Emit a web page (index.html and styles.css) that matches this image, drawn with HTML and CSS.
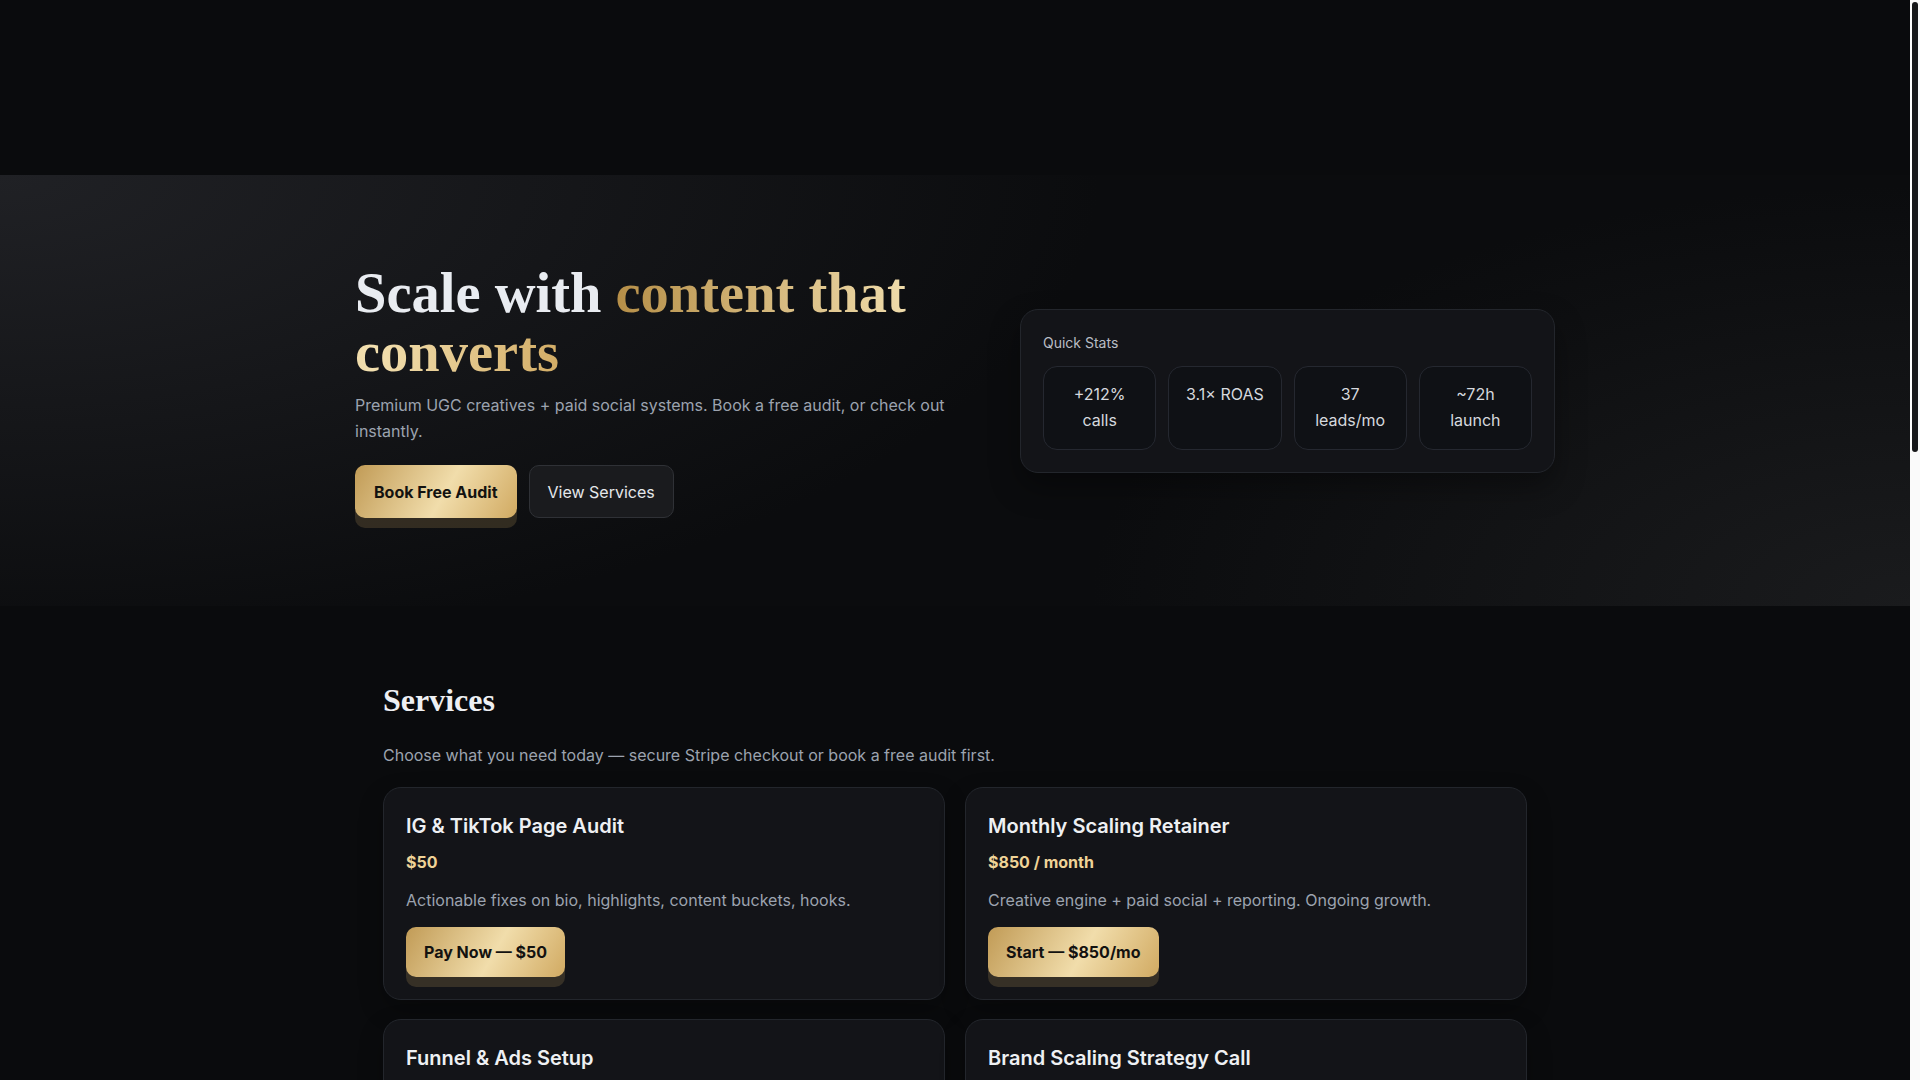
FILE: index.html
```html
<!DOCTYPE html>
<html lang="en">
<head>
<meta charset="utf-8">
<title>Scale with content that converts</title>
<link rel="stylesheet" href="styles.css">
</head>
<body>
<header class="topbar"></header>

<section class="hero">
  <div class="hero-inner">
    <div class="hero-copy">
      <h1>Scale with <span class="gold-text">content that converts</span></h1>
      <p class="lead">Premium UGC creatives + paid social systems. Book a free audit, or check out instantly.</p>
      <div class="actions">
        <a class="btn btn-gold btn-lg" href="#audit">Book Free Audit</a>
        <a class="btn btn-ghost btn-lg" href="#services">View Services</a>
      </div>
    </div>
    <aside class="stats">
      <div class="stats-label">Quick Stats</div>
      <div class="stat-grid">
        <div class="stat">+212%<br>calls</div>
        <div class="stat">3.1× ROAS</div>
        <div class="stat">37<br>leads/mo</div>
        <div class="stat">~72h<br>launch</div>
      </div>
    </aside>
  </div>
</section>

<section class="section services" id="services">
  <div class="container">
    <h2>Services</h2>
    <p class="sub">Choose what you need today — secure Stripe checkout or book a free audit first.</p>
    <div class="card-grid">
      <article class="card">
        <h3>IG &amp; TikTok Page Audit</h3>
        <div class="price">$50</div>
        <p class="desc">Actionable fixes on bio, highlights, content buckets, hooks.</p>
        <a class="btn btn-gold" href="#pay-audit">Pay Now — $50</a>
      </article>
      <article class="card">
        <h3>Monthly Scaling Retainer</h3>
        <div class="price">$850 / month</div>
        <p class="desc">Creative engine + paid social + reporting. Ongoing growth.</p>
        <a class="btn btn-gold" href="#pay-retainer">Start — $850/mo</a>
      </article>
      <article class="card">
        <h3>Funnel &amp; Ads Setup</h3>
        <div class="price">$497</div>
        <p class="desc">Landing page, pixel + CAPI, campaign structure and creative testing.</p>
        <a class="btn btn-gold" href="#pay-funnel">Pay Now — $497</a>
      </article>
      <article class="card">
        <h3>Brand Scaling Strategy Call</h3>
        <div class="price">$150</div>
        <p class="desc">60-minute deep dive with a custom 90-day growth roadmap.</p>
        <a class="btn btn-gold" href="#pay-call">Book — $150</a>
      </article>
    </div>
  </div>
</section>

<section class="section">
  <div class="container">
    <h2>How it works</h2>
    <p class="sub">A simple, proven process from audit to scale.</p>
    <div class="step-grid">
      <article class="card">
        <h3>1. Audit</h3>
        <p class="desc">We review your pages, ads and funnel to find the fastest wins.</p>
      </article>
      <article class="card">
        <h3>2. Create</h3>
        <p class="desc">UGC creatives and hooks built for scroll-stopping performance.</p>
      </article>
      <article class="card">
        <h3>3. Scale</h3>
        <p class="desc">Paid social systems, testing and reporting that compound growth.</p>
      </article>
    </div>
  </div>
</section>

<section class="section">
  <div class="container">
    <h2>Results</h2>
    <p class="sub">What clients see after working with us.</p>
    <div class="step-grid">
      <article class="card">
        <h3>+212% calls</h3>
        <p class="desc">Local service brand, 60 days of UGC + paid social.</p>
      </article>
      <article class="card">
        <h3>3.1× ROAS</h3>
        <p class="desc">E-commerce store, new creative engine and testing plan.</p>
      </article>
      <article class="card">
        <h3>37 leads/mo</h3>
        <p class="desc">Coaching business, funnel rebuild and lead campaigns.</p>
      </article>
    </div>
  </div>
</section>

<section class="section" id="audit">
  <div class="container">
    <div class="card cta">
      <h2>Book a free audit</h2>
      <p class="sub">Get a short video breakdown of your page and ads within 72 hours.</p>
      <a class="btn btn-gold" href="#book">Book Free Audit</a>
    </div>
  </div>
</section>

<footer class="footer">
  <div class="container">© 2025 All rights reserved.</div>
</footer>

<div class="fake-scrollbar" aria-hidden="true"><div class="fake-thumb"></div></div>
</body>
</html>
```

FILE: styles.css
```css
html {
  background: #0a0b0d;
}

body {
  margin: 0 10px 0 0;
  background: #0a0b0d;
  color: #e9ecf1;
  font-family: Inter, "Noto Sans", "Liberation Sans", sans-serif;
  font-size: 16px;
}

a {
  text-decoration: none;
}

.fake-scrollbar {
  position: fixed;
  top: 0;
  right: 0;
  width: 10px;
  height: 100vh;
  background: #fafafa;
}

.fake-thumb {
  margin: 2px 0 0 2px;
  width: 6px;
  height: 450px;
  border-radius: 3px;
  background: #161719;
}

.topbar {
  height: 175px;
  background: #0a0b0d;
}

.hero {
  padding: 89px 0 88px;
  background:
    radial-gradient(1100px 480px at 0% 0%, #202125 0%, rgba(11, 12, 14, 0) 100%),
    radial-gradient(820px 420px at 100% 100%, #1a1b1d 0%, rgba(11, 12, 14, 0) 100%),
    #0b0c0e;
}

.hero-inner {
  max-width: 1200px;
  margin: 0 auto;
  display: grid;
  grid-template-columns: 600px 535px;
  justify-content: space-between;
  align-items: center;
}

h1 {
  margin: 0 0 10px;
  font-family: "Liberation Serif", "Times New Roman", serif;
  font-weight: 700;
  font-size: 56.5px;
  line-height: 59px;
  color: #e9ecf1;
}

.gold-text {
  background: linear-gradient(90deg, #b68f48 0%, #f3e0b0 62%, #d3ad66 100%);
  -webkit-background-clip: text;
  background-clip: text;
  color: transparent;
}

.lead {
  margin: 0 0 21px;
  font-size: 16px;
  line-height: 26px;
  color: #9ca3af;
}

.actions {
  display: flex;
  gap: 12px;
}

.btn {
  display: inline-flex;
  align-items: center;
  box-sizing: border-box;
  height: 50px;
  padding: 0 18px;
  border-radius: 10px;
  font-size: 16px;
  line-height: 22px;
}

.btn-lg {
  height: 53px;
  padding: 0 19px;
}

.btn-gold {
  background: linear-gradient(120deg, #c19b56 0%, #f1ddab 55%, #d1aa62 100%);
  color: #131210;
  font-weight: 700;
  box-shadow: 0 10px 0 rgba(196, 160, 96, 0.2);
}

.btn-ghost {
  background: #1a1b1e;
  border: 1px solid #2f3136;
  color: #e5e7eb;
  font-weight: 400;
  padding: 0 18px;
}

.stats {
  background: #131418;
  border: 1px solid #23262c;
  border-radius: 18px;
  padding: 22px;
  box-shadow: 0 14px 30px rgba(0, 0, 0, 0.35);
}

.stats-label {
  margin: 0 0 12px;
  font-size: 14px;
  line-height: 22px;
  color: #b9bdc5;
}

.stat-grid {
  display: grid;
  grid-template-columns: repeat(4, 1fr);
  gap: 12px;
}

.stat {
  background: #0f1115;
  border: 1px solid #252830;
  border-radius: 14px;
  padding: 14px 6px 16px;
  text-align: center;
  font-size: 16px;
  line-height: 26px;
  color: #d6d9de;
}

.section {
  padding: 75px 0 60px;
}

.services {
  padding-bottom: 70px;
}

.container {
  max-width: 1144px;
  margin: 0 auto;
}

h2 {
  margin: 0 0 23px;
  font-family: "Liberation Serif", "Times New Roman", serif;
  font-weight: 700;
  font-size: 32px;
  line-height: 38px;
  color: #eef0f3;
}

.sub {
  margin: 0 0 19px;
  font-size: 16px;
  line-height: 26px;
  color: #9ca3af;
}

.card-grid {
  display: grid;
  grid-template-columns: 1fr 1fr;
  gap: 19px 20px;
}

.step-grid {
  display: grid;
  grid-template-columns: repeat(3, 1fr);
  gap: 20px;
}

.card {
  background: #131418;
  border: 1px solid #23262c;
  border-radius: 18px;
  padding: 22px;
  box-shadow: 0 10px 24px rgba(0, 0, 0, 0.25);
}

.card h3 {
  margin: 0 0 8px;
  font-size: 20px;
  line-height: 32px;
  font-weight: 600;
  color: #eef0f3;
}

.price {
  margin: 0 0 13px;
  font-size: 16px;
  line-height: 24px;
  font-weight: 700;
  color: #efd397;
}

.desc {
  margin: 0 0 14px;
  font-size: 16px;
  line-height: 26px;
  color: #9ca3af;
}

.cta {
  padding: 40px 32px 50px;
}

.footer {
  padding: 60px 0 80px;
  font-size: 14px;
  color: #6b7280;
}
```
